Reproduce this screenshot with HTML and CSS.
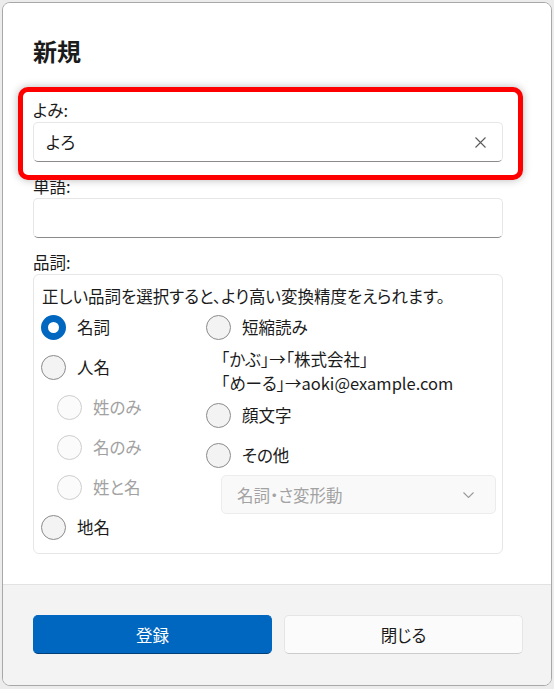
FILE: index.html
```html
<!DOCTYPE html>
<html lang="ja">
<head>
<meta charset="utf-8">
<title>新規</title>
<link rel="stylesheet" href="styles.css">
</head>
<body>
<div class="window">
  <div class="content">
    <h1 class="title">新規</h1>
    <div class="highlight">
      <div class="label">よみ:</div>
      <div class="textbox">
        <span class="value">よろ</span>
        <span class="clear">
          <svg width="11" height="11" viewBox="0 0 11 11"><path d="M0.5 0.5 L10.5 10.5 M10.5 0.5 L0.5 10.5" stroke="#5a5a5a" stroke-width="1.1" fill="none"/></svg>
        </span>
      </div>
    </div>
    <div class="label label-word">単語:</div>
    <div class="textbox"></div>
    <div class="label label-pos">品詞:</div>
    <div class="group">
      <div class="desc">正しい品詞を選択すると、より高い変換精度をえられます。</div>
      <div class="cols">
        <div class="col col-left">
          <div class="radio checked"><span class="dot"></span><span class="rtext">名詞</span></div>
          <div class="radio"><span class="dot"></span><span class="rtext">人名</span></div>
          <div class="radio sub disabled"><span class="dot"></span><span class="rtext">姓のみ</span></div>
          <div class="radio sub disabled"><span class="dot"></span><span class="rtext">名のみ</span></div>
          <div class="radio sub disabled"><span class="dot"></span><span class="rtext">姓と名</span></div>
          <div class="radio"><span class="dot"></span><span class="rtext">地名</span></div>
        </div>
        <div class="col col-right">
          <div class="radio"><span class="dot"></span><span class="rtext">短縮読み</span></div>
          <div class="examples">
            <div>「かぶ」→「株式会社」</div>
            <div>「めーる」→aoki@example.com</div>
          </div>
          <div class="radio"><span class="dot"></span><span class="rtext">顔文字</span></div>
          <div class="radio"><span class="dot"></span><span class="rtext">その他</span></div>
          <div class="dropdown">
            <span class="dd-text">名詞・さ変形動</span>
            <svg class="chev" width="11" height="6" viewBox="0 0 11 6"><path d="M0.5 0.5 L5.5 5.5 L10.5 0.5" stroke="#9a9a9a" stroke-width="1.1" fill="none"/></svg>
          </div>
        </div>
      </div>
    </div>
  </div>
  <div class="footer">
    <button class="btn primary">登録</button>
    <button class="btn secondary">閉じる</button>
  </div>
</div>
</body>
</html>
```

FILE: styles.css
```css
* { box-sizing: border-box; }

html, body {
  margin: 0;
  padding: 0;
}

body {
  background: #ececec;
  padding: 2px;
  font-family: "Noto Sans CJK JP", "Noto Sans", sans-serif;
  font-feature-settings: "palt";
  color: #1b1b1b;
  font-size: 16.5px;
}

.window {
  width: 550px;
  height: 684px;
  border: 1px solid #a8a8a8;
  border-radius: 8px;
  overflow: hidden;
  background: #ffffff;
  display: flex;
  flex-direction: column;
}

.content {
  flex: 1;
  padding: 32px 48px 0 30px;
  background: #ffffff;
}

.title {
  margin: 0;
  font-size: 24px;
  line-height: 32px;
  font-weight: 700;
  color: #1b1b1b;
}

.label {
  font-size: 16.5px;
  line-height: 24px;
  height: 24px;
}

.highlight {
  position: relative;
  z-index: 1;
  margin: 20px -20px -18px -15px;
  padding: 6px 15px 13px 10px;
  border: 5px solid #ff0000;
  border-radius: 10px;
  background: #ffffff;
  box-shadow: 0 0 8px rgba(0, 0, 0, 0.28);
}

.label-word { margin-top: 12px; }
.label-pos { margin-top: 12px; }

.textbox {
  height: 40px;
  border: 1px solid #e6e6e6;
  border-bottom-color: #8a8a8a;
  border-radius: 5px;
  background: #ffffff;
  display: flex;
  align-items: center;
  padding-left: 12px;
  padding-right: 16px;
}

.value {
  flex: 1;
  font-size: 16.5px;
}

.clear {
  display: flex;
  align-items: center;
}

.group {
  border: 1px solid #e6e6e6;
  border-radius: 6px;
  padding: 10px 6px 6px 7px;
  height: 280px;
}

.desc {
  line-height: 22px;
  padding-left: 1px;
}

.cols {
  display: flex;
}

.col-left { width: 165px; }
.col-right { flex: 1; }

.radio {
  height: 40px;
  display: flex;
  align-items: center;
  gap: 11px;
}

.radio.sub { padding-left: 16px; }

.dot {
  width: 25px;
  height: 25px;
  border-radius: 50%;
  border: 1px solid #8b8b8b;
  background: #f3f3f3;
  flex: none;
}

.radio.checked .dot {
  border: 7px solid #0067c0;
  background: #ffffff;
}

.radio.disabled .dot {
  border-color: #cdcdcd;
  background: #fbfbfb;
}

.radio.disabled .rtext { color: #a2a2a2; }

.examples {
  margin-left: 15px;
  line-height: 24px;
}

.dropdown {
  margin-left: 15px;
  width: 275px;
  height: 39px;
  border: 1px solid #ececec;
  border-radius: 5px;
  background: #f9f9f9;
  display: flex;
  align-items: center;
  padding: 0 21px 0 15px;
}

.dd-text {
  flex: 1;
  color: #a2a2a2;
}

.footer {
  height: 101px;
  border-top: 1px solid #e2e2e2;
  background: #f3f3f3;
  display: flex;
  gap: 12px;
  padding: 30px 28px 0 30px;
}

.btn {
  width: 239px;
  height: 39px;
  border-radius: 5px;
  font-family: inherit;
  font-size: 16.5px;
  font-feature-settings: "palt";
  padding: 0;
  cursor: default;
}

.primary {
  background: #0067c0;
  color: #ffffff;
  border: 1px solid #0067c0;
  border-bottom-color: #003f78;
}

.secondary {
  background: #fbfbfb;
  color: #1b1b1b;
  border: 1px solid #e5e5e5;
  border-bottom-color: #cccccc;
}
```
